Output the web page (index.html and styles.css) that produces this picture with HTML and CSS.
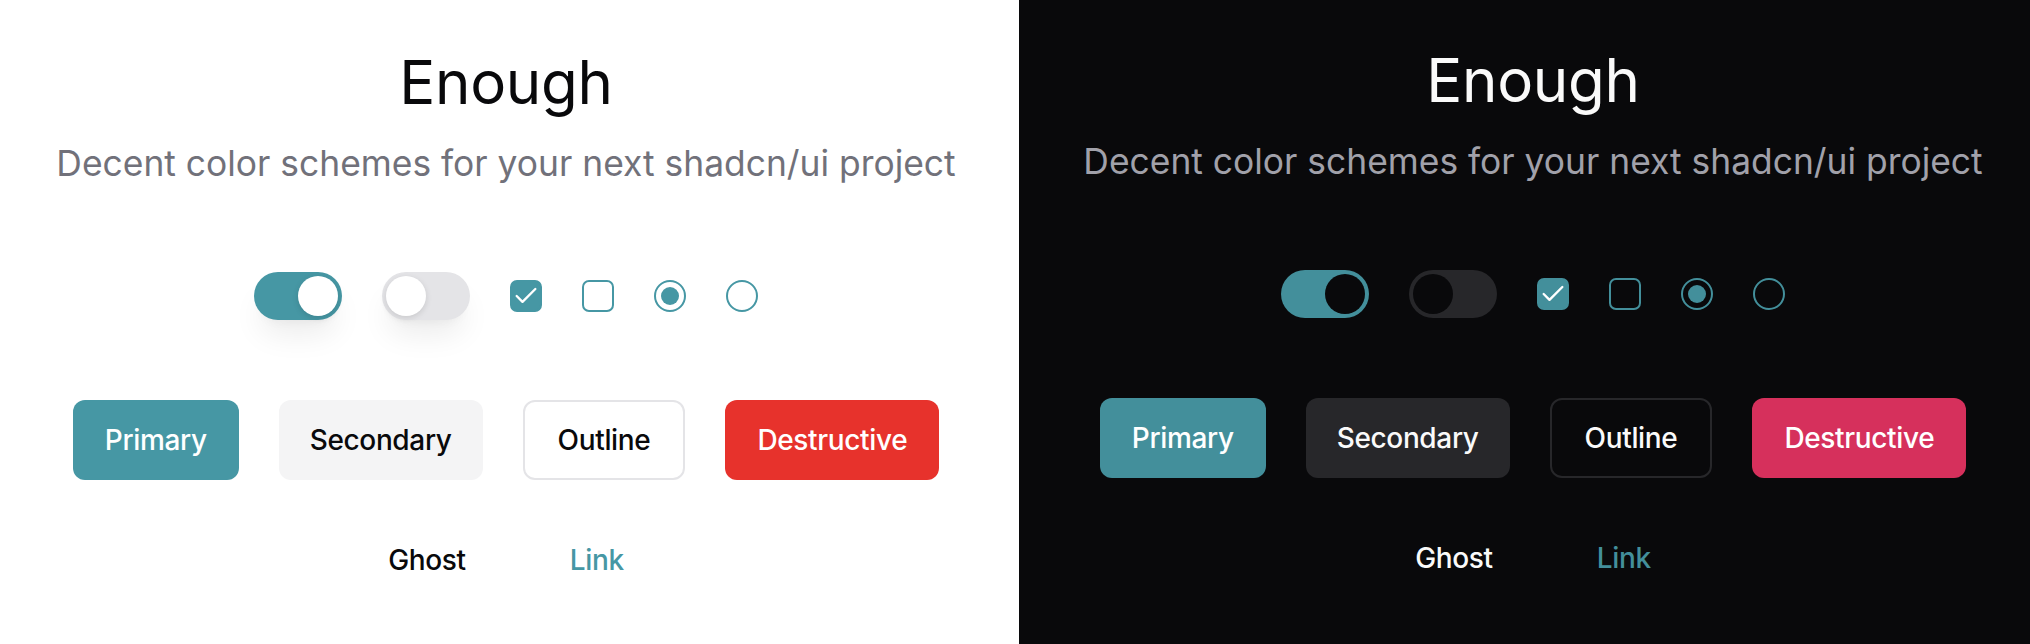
FILE: index.html
```html
<!DOCTYPE html>
<html>
<head>
<meta charset="utf-8">
<link rel="stylesheet" href="styles.css">
</head>
<body>
<div class="split">
  <section class="panel light">
    <h1 class="title">Enough</h1>
    <p class="subtitle">Decent color schemes for your next shadcn/ui project</p>
    <div class="controls">
      <span class="switch on"><span class="thumb"></span></span>
      <span class="switch off"><span class="thumb"></span></span>
      <span class="checkbox checked"><svg viewBox="0 0 24 24" width="28" height="28"><path d="M20 6 9 17l-5-5" fill="none" stroke="currentColor" stroke-width="2" stroke-linecap="round" stroke-linejoin="round"/></svg></span>
      <span class="checkbox"></span>
      <span class="radio checked"><span class="dot"></span></span>
      <span class="radio"></span>
    </div>
    <div class="buttons">
      <span class="btn primary">Primary</span>
      <span class="btn secondary">Secondary</span>
      <span class="btn outline">Outline</span>
      <span class="btn destructive">Destructive</span>
    </div>
    <div class="buttons row2">
      <span class="btn ghost">Ghost</span>
      <span class="btn link">Link</span>
    </div>
  </section>
  <section class="panel dark">
    <h1 class="title">Enough</h1>
    <p class="subtitle">Decent color schemes for your next shadcn/ui project</p>
    <div class="controls">
      <span class="switch on"><span class="thumb"></span></span>
      <span class="switch off"><span class="thumb"></span></span>
      <span class="checkbox checked"><svg viewBox="0 0 24 24" width="28" height="28"><path d="M20 6 9 17l-5-5" fill="none" stroke="currentColor" stroke-width="2" stroke-linecap="round" stroke-linejoin="round"/></svg></span>
      <span class="checkbox"></span>
      <span class="radio checked"><span class="dot"></span></span>
      <span class="radio"></span>
    </div>
    <div class="buttons">
      <span class="btn primary">Primary</span>
      <span class="btn secondary">Secondary</span>
      <span class="btn outline">Outline</span>
      <span class="btn destructive">Destructive</span>
    </div>
    <div class="buttons row2">
      <span class="btn ghost">Ghost</span>
      <span class="btn link">Link</span>
    </div>
  </section>
</div>
</body>
</html>
```

FILE: styles.css
```css
* { box-sizing: border-box; }
html, body { margin: 0; padding: 0; }
body {
  font-family: "Inter", "DejaVu Sans", sans-serif;
  width: 2030px;
  height: 644px;
  overflow: hidden;
}
.split { display: flex; height: 644px; }
.panel {
  display: flex;
  flex-direction: column;
  align-items: center;
  height: 644px;
}
.light {
  flex: 0 0 1019px;
  background: #ffffff;
  color: #09090b;
  padding: 46px 7px 0 0;
  --primary: #4697a4;
  --muted: #71717a;
  --secondary: #f4f4f5;
  --border: #e4e4e7;
  --destructive: #e7322c;
  --thumb: #ffffff;
  --switch-off: #e4e4e7;
}
.dark {
  flex: 1 1 auto;
  background: #09090b;
  color: #fafafa;
  padding: 44px 0 0 17px;
  --primary: #438f9b;
  --muted: #a1a1aa;
  --secondary: #27272a;
  --border: #27272a;
  --destructive: #d6305c;
  --thumb: #09090b;
  --switch-off: #27272a;
}
.title {
  margin: 0;
  font-size: 60px;
  line-height: 72px;
  font-weight: 400;
  letter-spacing: -0.3px;
}
.subtitle {
  margin: 22px 0 0;
  font-size: 35.4px;
  line-height: 48px;
  color: var(--muted);
  letter-spacing: 0;
}
.controls {
  margin-top: 84px;
  display: flex;
  align-items: center;
  gap: 40px;
  height: 48px;
}
.switch {
  width: 88px;
  height: 48px;
  border-radius: 24px;
  padding: 4px;
  display: flex;
  align-items: center;
}
.light .switch { box-shadow: 0 20px 30px -6px rgba(0,0,0,0.08), 0 8px 12px -8px rgba(0,0,0,0.06); }
.switch.on { background: var(--primary); justify-content: flex-end; }
.switch.off { background: var(--switch-off); justify-content: flex-start; }
.thumb {
  width: 40px;
  height: 40px;
  border-radius: 50%;
  background: var(--thumb);
}
.light .thumb { box-shadow: 0 2px 6px rgba(0,0,0,0.12); }
.checkbox {
  width: 32px;
  height: 32px;
  border: 2px solid var(--primary);
  border-radius: 7px;
  display: flex;
  align-items: center;
  justify-content: center;
}
.checkbox.checked { background: var(--primary); color: #ffffff; }
.checkbox svg { display: block; }
.radio {
  width: 32px;
  height: 32px;
  border: 2px solid var(--primary);
  border-radius: 50%;
  display: flex;
  align-items: center;
  justify-content: center;
}
.dot {
  width: 18px;
  height: 18px;
  border-radius: 50%;
  background: var(--primary);
}
.buttons {
  margin-top: 80px;
  display: flex;
  gap: 40px;
}
.buttons.row2 { margin-top: 40px; }
.btn {
  height: 80px;
  padding: 0 32px;
  border-radius: 12px;
  display: flex;
  align-items: center;
  font-size: 28px;
  font-weight: 500;
  letter-spacing: -0.35px;
}
.primary { background: var(--primary); color: #ffffff; }
.secondary { background: var(--secondary); padding: 0 31px; }
.outline { border: 2px solid var(--border); padding: 0 33px; }
.destructive { background: var(--destructive); color: #ffffff; }
.link { color: var(--primary); }
```
